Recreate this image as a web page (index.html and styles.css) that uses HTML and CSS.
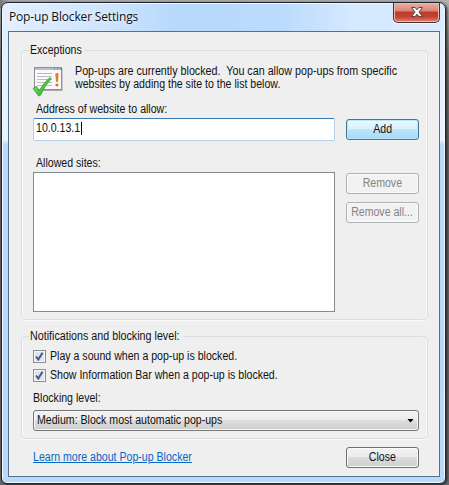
FILE: index.html
```html
<!DOCTYPE html>
<html lang="en">
<head>
<meta charset="utf-8">
<title>Pop-up Blocker Settings</title>
<link rel="stylesheet" href="styles.css">
</head>
<body>
<main class="window">
  <header class="titlebar">
    <h1>Pop-up Blocker Settings</h1>
    <button class="window-close" aria-label="Close window">
      <svg width="14" height="12" viewBox="0 0 14 12"><path d="M1.5 1.5h3.7L7 3.8l1.8-2.3h3.7L9 6l3.5 4.5H8.8L7 8.2l-1.8 2.3H1.5L5 6z" fill="#f8f8f8" stroke="#5c4146" stroke-width="1"/></svg>
    </button>
  </header>
  <section class="client">
    <fieldset class="group exceptions">
      <legend><span class="t">Exceptions</span></legend>
      <div class="intro">
        <svg class="site-icon" width="32" height="32" viewBox="0 0 32 32">
          <defs>
            <linearGradient id="check" x1="0" y1="0" x2="1" y2="1"><stop offset="0" stop-color="#8be66c"/><stop offset="1" stop-color="#25a526"/></linearGradient>
          </defs>
          <rect x="3" y="3" width="27.5" height="23" fill="#aaa"/>
          <rect x="2.5" y="2.500" width="27" height="22" fill="#fafafa" stroke="#8c8f93"/>
          <path d="M3 4h26" stroke="#b9c1cc" stroke-width="2"/>
          <path d="M22 4h1M25 4h1M28 4h1" stroke="#4d6078"/>
          <path d="M5 8.500h15M5 11.500h15M5 14.500h15M5 17.500h15M5 20.500h15" stroke="#bcbcbc"/>
          <path d="M23.200 8.500q1.800-1.200 3.500 0l-.8 8.500h-1.800z" fill="#df8424"/>
          <circle cx="25" cy="20" r="1.600" fill="#d97a20"/>
          <path d="M1 23.500l3.300-2.200 3.200 3.900Q12 17 18 12.500l1.200 1.200Q12.500 21 8.500 30.300L6.600 31z" fill="url(#check)" stroke="#269c2b" stroke-width=".7"/>
        </svg>
        <p><span class="t line1">Pop-ups are currently blocked.&nbsp; You can allow pop-ups from specific</span><span class="t line2">websites by adding the site to the list below.</span></p>
      </div>
      <div class="field-label"><span class="t address">Address of website to allow:</span></div>
      <div class="row address-row">
        <div class="textbox"><span class="t ip">10.0.13.1</span><i class="caret"></i></div>
        <button class="button add"><span class="t">Add</span></button>
      </div>
      <div class="field-label allowed"><span class="t">Allowed sites:</span></div>
      <div class="row">
        <div class="listbox"></div>
        <div class="actions">
          <button class="button" disabled><span class="t">Remove</span></button>
          <button class="button" disabled><span class="t">Remove all...</span></button>
        </div>
      </div>
    </fieldset>
    <fieldset class="group notifications">
      <legend><span class="t">Notifications and blocking level:</span></legend>
      <div class="check-row"><span class="checkbox"><svg width="9" height="9" viewBox="0 0 9 9"><path d="M1 4.500l2.300 3L7.500.8" fill="none" stroke="#46568f" stroke-width="2"/></svg></span><span class="t">Play a sound when a pop-up is blocked.</span></div>
      <div class="check-row"><span class="checkbox"><svg width="9" height="9" viewBox="0 0 9 9"><path d="M1 4.500l2.300 3L7.500.8" fill="none" stroke="#46568f" stroke-width="2"/></svg></span><span class="t">Show Information Bar when a pop-up is blocked.</span></div>
      <div class="level-label"><span class="t">Blocking level:</span></div>
      <div class="combo"><span class="t">Medium: Block most automatic pop-ups</span><i class="arrow"></i></div>
    </fieldset>
    <footer>
      <a><span class="t">Learn more about Pop-up Blocker</span></a>
      <button class="button"><span class="t">Close</span></button>
    </footer>
  </section>
</main>
</body>
</html>
```

FILE: styles.css
```css
* { box-sizing: border-box; }
body {
  margin: 0;
  width: 449px;
  height: 485px;
  overflow: hidden;
  padding: 2px 4px 1px 1px;
  background: linear-gradient(90deg, #777 0, #aaa 10px, #aaa 437px, transparent 437px) 0 0 / 100% 8px no-repeat, linear-gradient(#b1b1ae 0, #777 60px, #666 150px, #696969);
  font: 12px/13px "Liberation Sans", Arial, sans-serif;
  color: #111;
}
.window {
  width: 445px;
  height: 482px;
  padding: 0 6px 6px;
  border: 1px solid #20262d;
  border-radius: 7px 7px 6px 6px;
  background: linear-gradient(90deg, #e2effe 0, #cfe5fd 100px, #b6d8fb 180px, #bbdbfc 280px, #d5e9ff 350px, #d8ebff 100%) 0 0 / 100% 28px no-repeat,
    linear-gradient(#deedff 0, #eaf4ff 137px, #b9d9fb 141px, #b9d9fb 100%);
  box-shadow: inset 0 0 0 1px #eff8ff, 1px 1px 3px #222;
}
.titlebar { display: flex; justify-content: space-between; height: 28px; }
h1 {
  margin: 6px 0 0 1px;
  font: 12px/16px "Open Sans", sans-serif;
  letter-spacing: -.16px;
  color: #111;
  white-space: nowrap;
  text-shadow: 0 0 5px #fff;
}
.window-close {
  display: grid;
  place-items: center;
  width: 47px;
  height: 20px;
  margin-right: -1px;
  padding: 0 0 1px;
  border: 1px solid #512d33;
  border-top: 0;
  border-radius: 0 0 5px 5px;
  background: linear-gradient(#e9b0a6 0, #d98478 8px, #be3a29 9px, #c74331 14px, #df8774 100%);
  box-shadow: inset 0 0 0 1px #efb9ae, 0 1px 0 #f2f8ff;
}
.client {
  width: 432px;
  height: 446px;
  padding: 12px 11px 0 12px;
  border: 1px solid #53708d;
  background: #efefef;
}
.t { display: inline-block; white-space: pre; transform: scaleX(.882); transform-origin: 0 50%; }
.line1 { transform: scaleX(.894); }
.group {
  min-width: 0;
  margin: 0;
  padding: 0 8px 0 11px;
  border: 1px solid #d5dfe5;
  border-radius: 4px;
  box-shadow: inset 1px 0 #fafafa, inset -1px 0 #fafafa, 0 1px #fafafa;
}
.exceptions { height: 276px; }
legend { height: 13px; margin-left: -4px; padding: 0 0 0 1px; }
.exceptions legend { width: 55px; }
.notifications { height: 109px; margin-top: 10px; }
.notifications legend { width: 154px; }
.notifications legend .t { transform: scaleX(.893); }
.intro { display: flex; height: 45px; padding-top: 8px; }
.site-icon { flex: none; margin-left: -1px; }
.intro p { margin: 0 0 0 11px; width: 330px; }
.intro .t { display: block; height: 13px; }
.field-label { height: 13px; margin-top: 1px; padding-left: 3px; }
.row { display: flex; gap: 11px; }
.address-row { margin-top: 2px; align-items: center; }
.textbox {
  display: flex;
  width: 302px;
  height: 23px;
  padding: 3px 2px;
  background: #fff;
  border: 1px solid #b5cfe7;
  border-top-color: #3d7bad;
  border-radius: 2px;
}
.ip { width: 51px; margin-right: -6px; }
.caret { width: 1px; height: 13px; background: #000; }
.button {
  display: flex;
  justify-content: center;
  align-items: center;
  width: 73px;
  height: 21px;
  flex: none;
  padding: 0;
  font: inherit;
  color: #111;
  border: 1px solid #707070;
  border-radius: 3px;
  background: linear-gradient(#f3f3f3 0, #ebebeb 48%, #dcdcdc 50%, #cecece 100%);
  box-shadow: inset 0 0 0 1px #fafafa;
}
.button .t { transform-origin: 50% 50%; }
.add {
  border-color: #3d7898;
  background: linear-gradient(#edf7fd 0, #d9f0fc 48%, #bee6fd 50%, #a5d8f2 100%);
  box-shadow: inset 0 0 0 1px #b8e7fa;
}
.button:disabled { color: #848484; border-color: #adb2b5; background: #f2f2f2; }
.allowed { margin-top: 16px; margin-bottom: 2px; }
.listbox { width: 302px; height: 140px; background: #fff; border: 1px solid #858990; }
.actions { display: grid; gap: 8px; align-content: start; padding-top: 1px; }
.check-row { display: flex; align-items: center; gap: 4px; height: 19px; }
.notifications legend + .check-row { margin-top: 4px; }
.checkbox { display: grid; place-items: center; width: 13px; height: 13px; border: 1px solid #8b8f94; background: #dfe3ea; box-shadow: inset 0 0 0 1px #f5f5f5; }
.level-label { height: 13px; margin: 7px 0 5px; }
.combo {
  display: flex;
  justify-content: space-between;
  align-items: center;
  width: 386px;
  height: 21px;
  padding: 0 4px 0 3px;
  border: 1px solid #777;
  border-radius: 3px;
  background: linear-gradient(#f3f3f3 0, #ebebeb 48%, #dedede 50%, #cdcdcd 100%);
  box-shadow: inset 0 0 0 1px #f7f7f7;
}
.arrow { width: 7px; height: 4px; background: #000; clip-path: polygon(0 0, 100% 0, 50% 100%); }
footer { display: flex; justify-content: space-between; margin: 8px 9px 0 12px; }
footer a { height: 17px; padding-top: 4px; color: #0866c6; }
footer a .t { text-decoration: underline; }
```
